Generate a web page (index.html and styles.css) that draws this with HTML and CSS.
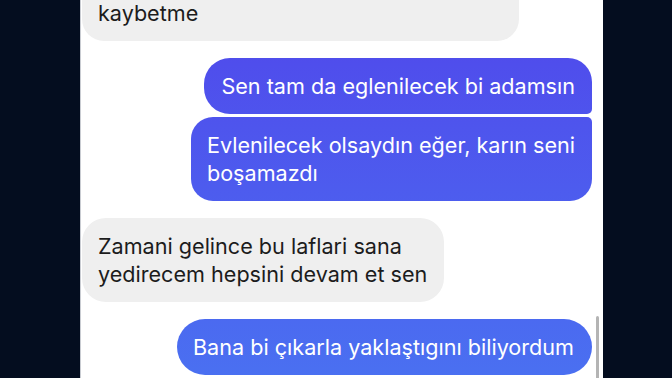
FILE: index.html
```html
<!DOCTYPE html>
<html>
<head>
    <meta charset="UTF-8">
    <title>Sohbet</title>
    <link rel="stylesheet" href="styles.css">
</head>
<body>
    <div class="chat">
        <div class="thread">
            <div class="msg in first">kaybetme</div>
            <div class="msg out top">Sen tam da eglenilecek bi adamsın</div>
            <div class="msg out bottom">Evlenilecek olsaydın eğer, karın seni<br>boşamazdı</div>
            <div class="msg in">Zamani gelince bu laflari sana<br>yedirecem hepsini devam et sen</div>
            <div class="msg out single">Bana bi çıkarla yaklaştıgını biliyordum</div>
        </div>
        <div class="scrollbar"></div>
    </div>
</body>
</html>
```

FILE: styles.css
```css
body {
    margin: 0;
    background-color: #040d1f;
    font-family: Inter, "Noto Sans", sans-serif;
}
.chat {
    position: relative;
    width: 523px;
    height: 378px;
    margin-left: 80px;
    background-color: #fff;
    border-left: 1px solid #c9ccd2;
    box-sizing: border-box;
    overflow: hidden;
}
.thread {
    height: 100%;
    display: flex;
    flex-direction: column;
    justify-content: flex-end;
    padding: 0 11px 3px 1px;
    box-sizing: border-box;
}
.msg {
    font-size: 21.6px;
    line-height: 28px;
    padding: 14px 17px;
    border-radius: 24px;
    white-space: nowrap;
}
.msg.in {
    align-self: flex-start;
    background-color: #efefef;
    color: #1c1c1c;
    padding-left: 16px;
    margin-top: 17px;
}
.msg.in.first {
    width: 404px;
    margin-top: 0;
    border-radius: 0 0 22px 22px;
}
.msg.out {
    align-self: flex-end;
    color: #fff;
    background: linear-gradient(to bottom, #5047eb, #4a70f1) fixed;
    margin-top: 17px;
}
.msg.out.top {
    border-radius: 26px 24px 5px 26px;
}
.msg.out.bottom {
    margin-top: 3px;
    border-radius: 22px 5px 22px 22px;
    padding-left: 16px;
}
.msg.out.single {
    padding-left: 16px;
    padding-right: 18px;
    border-radius: 28px;
}
.scrollbar {
    position: absolute;
    left: 515px;
    top: 316px;
    width: 3px;
    height: 70px;
    border-radius: 2px;
    background-color: #b4b4b4;
}
```
